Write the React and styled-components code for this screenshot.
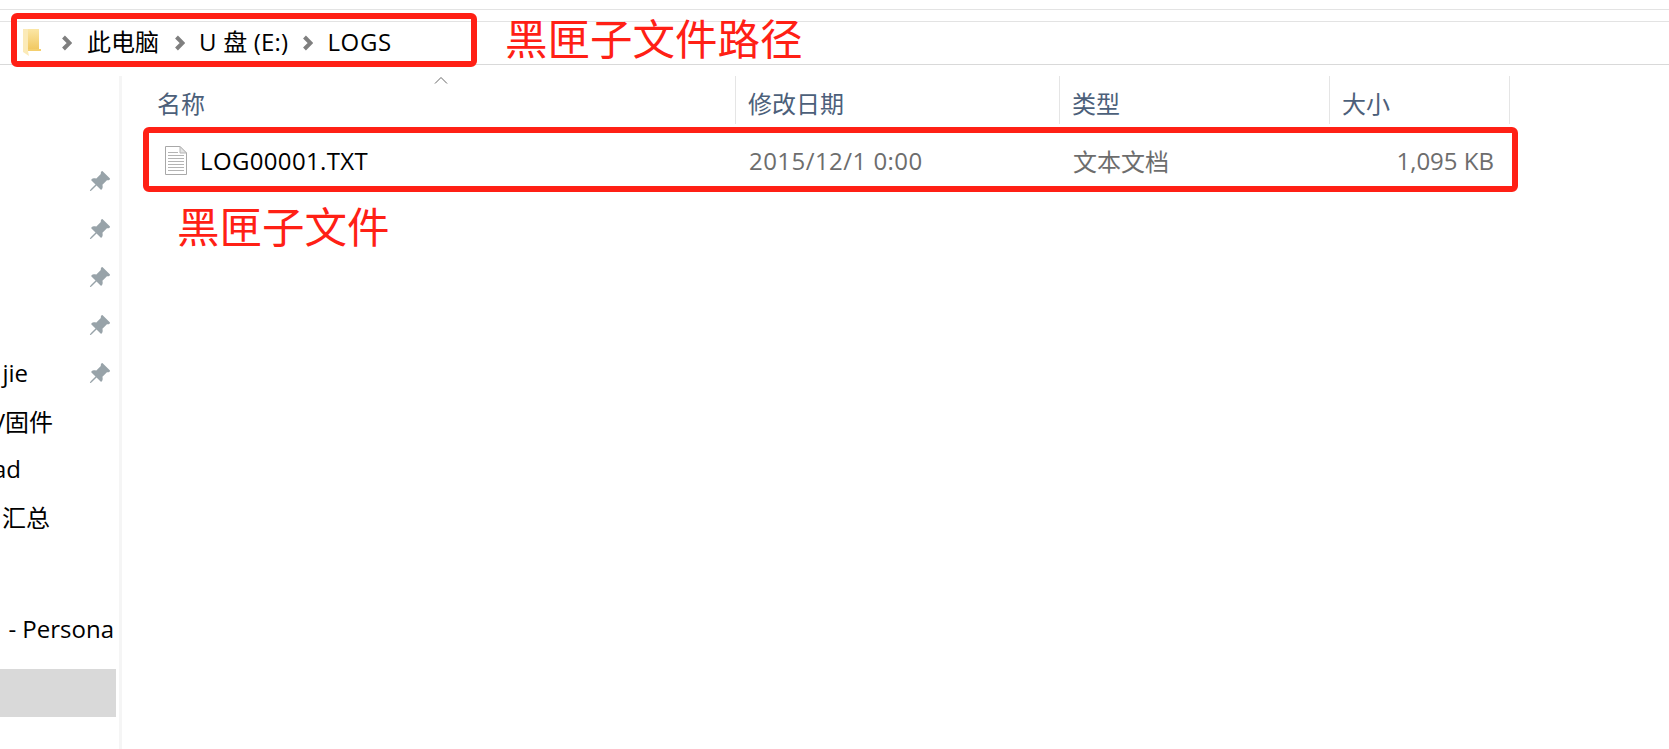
import React from "react";
import styled, { createGlobalStyle } from "styled-components";
import { BsPinAngleFill } from "react-icons/bs";

const FONT = `"Open Sans", "Noto Sans", "Noto Sans CJK SC", sans-serif`;
const RED = "#ff2015";

const GlobalStyle = createGlobalStyle`
    html, body {
        margin: 0;
        padding: 0;
        background: #fff;
        overflow: hidden;
    }
    * {
        box-sizing: border-box;
    }
`;

const Page = styled.div`
    position: relative;
    width: 1669px;
    height: 749px;
    overflow: hidden;
    font-family: ${FONT};
    font-size: 24px;
    color: #000;
`;

const TopRule = styled.div`
    height: 10px;
    border-bottom: 1px solid #e3e3e3;
`;

const AddressBar = styled.div`
    display: flex;
    align-items: center;
    height: 44px;
    margin-top: 11px;
    padding-left: 23px;
    border-top: 1px solid #e3e3e3;
    border-bottom: 1px solid #d9d9d9;
`;

const Crumb = styled.span`
    white-space: nowrap;
    line-height: 32px;
    padding-bottom: 2px;
    letter-spacing: ${({ $track }) => $track || 0}px;
`;

const Chevron = styled.svg`
    width: 10px;
    height: 16px;
    flex: none;
    margin: 0 ${({ $after }) => $after}px 0 ${({ $before }) => $before}px;
`;

const Main = styled.div`
    display: flex;
    height: 673px;
    margin-top: 11px;
`;

const Sidebar = styled.div`
    flex: none;
    width: 122px;
    padding-top: 82px;
    border-right: 3px solid #f5f5f5;
`;

const SideRow = styled.div`
    display: flex;
    align-items: center;
    height: 48px;
    margin-top: ${({ $gap }) => $gap || 0}px;
    width: ${({ $selected }) => ($selected ? "116px" : "auto")};
    background: ${({ $selected }) => ($selected ? "#d9d9d9" : "transparent")};
`;

const SideLabel = styled.div`
    display: flex;
    justify-content: flex-end;
    flex: none;
    width: ${({ $end }) => $end}px;
    padding-bottom: 4px;
    overflow: hidden;
    white-space: nowrap;
`;

const Pin = styled(BsPinAngleFill)`
    width: 23px;
    height: 23px;
    color: #98a3a9;
    margin: 0 8px 2px auto;
`;

const Content = styled.div`
    flex: 1;
    padding-left: 25px;
`;

const Columns = styled.div`
    display: grid;
    grid-template-columns: 589px 324px 270px 180px;
`;

const HeaderRow = styled(Columns)`
    position: relative;
    height: 52px;
`;

const HeaderCell = styled.div`
    display: flex;
    align-items: center;
    height: 48px;
    padding: 4px 0 0 ${({ $pad }) => $pad}px;
    color: #4c607a;
    border-right: 1px solid #e5e5e5;
`;

const SortArrow = styled.svg`
    position: absolute;
    left: 287px;
    top: 0;
    width: 14px;
    height: 8px;
`;

const FileRow = styled(Columns)`
    height: 64px;
    padding-top: 1px;
    align-items: center;
`;

const NameCell = styled.div`
    display: flex;
    align-items: center;
    gap: 13px;
    padding-left: 18px;
    letter-spacing: 0.35px;
`;

const MetaCell = styled.div`
    color: #6d6d6d;
    padding-left: 13px;
    white-space: nowrap;
    letter-spacing: ${({ $track }) => $track || 0}px;
`;

const SizeCell = styled.div`
    color: #6d6d6d;
    text-align: right;
    padding-right: 16px;
    white-space: nowrap;
`;

// red annotations drawn on top of the screenshot
const RedBox = styled.div`
    position: absolute;
    left: ${({ $x }) => $x}px;
    top: ${({ $y }) => $y}px;
    width: ${({ $w }) => $w}px;
    height: ${({ $h }) => $h}px;
    border: 6px solid ${RED};
    border-radius: 6px;
`;

const RedNote = styled.div`
    position: absolute;
    left: ${({ $x }) => $x}px;
    top: ${({ $y }) => $y}px;
    color: ${RED};
    font-size: 42.5px;
    line-height: 56px;
    white-space: nowrap;
`;

const FolderIcon = () => (
    <svg width="19" height="28" viewBox="0 0 19 28" style={{ flex: "none" }}>
        <defs>
            <linearGradient id="folderFill" x1="0" y1="0" x2="0" y2="1">
                <stop offset="0" stopColor="#fbe7a6" />
                <stop offset="1" stopColor="#f0c65c" />
            </linearGradient>
        </defs>
        <path d="M5 0H16V20H18V22H5Z" fill="url(#folderFill)" />
        <path d="M0 0H5V22L6 27L0 23Z" fill="#fbeab8" />
        <path d="M5 20H18V22H5Z" fill="#f4cf6e" />
    </svg>
);

const FileIcon = () => (
    <svg width="22" height="29" viewBox="0 0 22 29" style={{ flex: "none" }}>
        <path d="M.5.5H15L21.5 7V28.500H.5Z" fill="#fff" stroke="#a8a8a8" />
        <path d="M15 .5V7H21.500Z" fill="#e4e4e4" stroke="#b5b5b5" />
        <path
            d="M3 6.500H13M3 9.500H19M3 12.500H19M3 15.500H19M3 18.500H19M3 21.500H19M3 24.500H19"
            stroke="#b4b4b4"
        />
    </svg>
);

const CrumbChevron = ({ before, after }) => (
    <Chevron viewBox="0 0 10 16" $before={before} $after={after}>
        <path d="M1.500 2L7.500 8L1.500 14" fill="none" stroke="#7f7f7f" strokeWidth="4" />
    </Chevron>
);

const sideItems = [
    { pinned: true },
    { pinned: true },
    { pinned: true },
    { pinned: true },
    { pinned: true, label: "jie", end: 28 },
    { label: "V固件", end: 53 },
    { label: "ad", end: 21 },
    { label: "汇总", end: 50 },
    {},
    { label: "- Persona", end: 114, gap: 16 },
    { selected: true, gap: 15 },
];

const App = () => {
    return (
        <Page>
            <GlobalStyle />
            <TopRule />
            <AddressBar>
                <FolderIcon />
                <CrumbChevron before={20} after={15} />
                <Crumb>此电脑</Crumb>
                <CrumbChevron before={16} after={14} />
                <Crumb $track={0.2}>U 盘 (E:)</Crumb>
                <CrumbChevron before={15} after={14} />
                <Crumb $track={0.7}>LOGS</Crumb>
            </AddressBar>
            <Main>
                <Sidebar>
                    {sideItems.map((item, i) => (
                        <SideRow key={i} $gap={item.gap} $selected={item.selected}>
                            {item.label && <SideLabel $end={item.end}><span>{item.label}</span></SideLabel>}
                            {item.pinned && <Pin />}
                        </SideRow>
                    ))}
                </Sidebar>
                <Content>
                    <HeaderRow>
                        <SortArrow viewBox="0 0 14 8">
                            <path d="M1 7.500L7 1.500L13 7.500" fill="none" stroke="#666" />
                        </SortArrow>
                        <HeaderCell $pad={10}>名称</HeaderCell>
                        <HeaderCell $pad={12}>修改日期</HeaderCell>
                        <HeaderCell $pad={12}>类型</HeaderCell>
                        <HeaderCell $pad={12}>大小</HeaderCell>
                    </HeaderRow>
                    <FileRow>
                        <NameCell>
                            <FileIcon />
                            <span>LOG00001.TXT</span>
                        </NameCell>
                        <MetaCell $track={0.45}>2015/12/1 0:00</MetaCell>
                        <MetaCell>文本文档</MetaCell>
                        <SizeCell>1,095 KB</SizeCell>
                    </FileRow>
                </Content>
            </Main>
            <RedBox $x={11} $y={13} $w={466} $h={54} />
            <RedBox $x={143} $y={127} $w={1375} $h={65} />
            <RedNote $x={505} $y={11}>黑匣子文件路径</RedNote>
            <RedNote $x={177} $y={199}>黑匣子文件</RedNote>
        </Page>
    );
};

export default App;
